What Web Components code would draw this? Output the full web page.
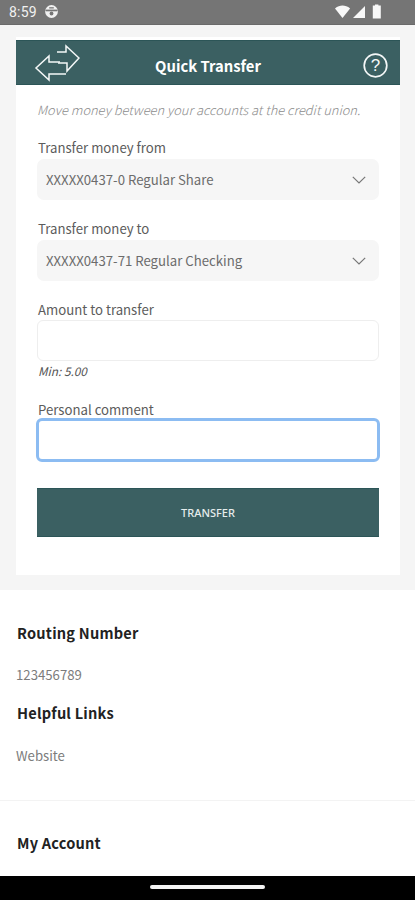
<!DOCTYPE html>
<html><head><meta charset="utf-8">
<style>
html,body{margin:0;padding:0;background:#fff}
body{width:415px;height:900px;overflow:hidden;font-family:"Noto Sans CJK SC","Source Sans Pro","Noto Sans",sans-serif;display:flex;flex-direction:column}
</style></head>
<body>
<status-bar></status-bar>
<transfer-panel>
  <transfer-card>
    <card-header title-text="Quick Transfer"></card-header>
    <p-note>Move money between your accounts at the credit union.</p-note>
    <select-field label="Transfer money from" value="XXXXX0437-0 Regular Share"></select-field>
    <select-field style="margin-top:19px" label="Transfer money to" value="XXXXX0437-71 Regular Checking"></select-field>
    <input-field label="Amount to transfer" hint="Min: 5.00"></input-field>
    <input-field label="Personal comment" focused></input-field>
    <action-button>TRANSFER</action-button>
  </transfer-card>
</transfer-panel>
<info-list>
  <info-head style="--top:33px">Routing Number</info-head>
  <info-text style="--top:22px">123456789</info-text>
  <info-head style="--top:18px">Helpful Links</info-head>
  <info-text style="--top:23px">Website</info-text>
  <info-rule></info-rule>
  <info-head style="--top:32px">My Account</info-head>
</info-list>
<nav-bar></nav-bar>
<script>
function def(name,html){
  customElements.define(name,class extends HTMLElement{
    constructor(){super();this.attachShadow({mode:'open'}).innerHTML=typeof html==='function'?'':html;}
    connectedCallback(){if(typeof html==='function')this.shadowRoot.innerHTML=html(this);}
  });
}
def('status-bar',`<style>
:host{display:flex;align-items:center;height:25px;flex:none;box-sizing:border-box;background:#757575;border-bottom:1px solid #6a6a6a;padding:0 33px 1px 9px;color:#f1f1f1;font:14px/1 Roboto,sans-serif}
.t{letter-spacing:.2px}
.r{margin-left:auto;display:flex;align-items:center}
svg{display:block}
</style>
<span class="t">8:59</span>
<svg style="margin-left:7px" width="15" height="15" viewBox="0 0 15 15"><circle cx="7.5" cy="7.5" r="6.4" fill="#f1f1f1"/><rect x="1.5" y="5.6" width="12" height="1.7" fill="#757575"/><circle cx="7.5" cy="9.500" r="1.900" fill="#757575"/><rect x="5.2" y="3.2" width="4.6" height="1.3" fill="#757575"/></svg>
<span class="r">
<svg width="18" height="14" viewBox="0 0 18 14"><path d="M1 3.5C3.5 1.4 6 .6 8.5.6s5.2.8 7.6 2.9L8.5 13z" fill="#f8f8f8"/></svg>
<svg width="14" height="14" viewBox="0 0 14 14"><path d="M13 1v12H1z" fill="#f8f8f8"/></svg>
<svg style="margin-left:6px" width="10" height="15" viewBox="0 0 10 15"><path d="M3 1.500V.5h3.400v1H8.800V14.500H.8V1.500z" fill="#f8f8f8"/></svg>
</span>`);
def('transfer-panel',`<style>
:host{display:block;flex:none;background:#f5f5f5;padding:12px 15px 15px 16px;height:565px;box-sizing:border-box}
</style><slot></slot>`);
def('transfer-card',`<style>
:host{display:block;background:#fff;height:538px;padding-top:3px;box-sizing:border-box}
</style><slot></slot>`);
def('card-header',h=>`<style>
:host{display:flex;align-items:center;justify-content:center;position:relative;height:45px;background:#3b6062;border-top:1px solid #2c5557;border-bottom:1px solid #2c5557;box-sizing:border-box;color:#fff}
.t{font-size:14.800px;font-weight:700;position:relative;top:3px}
.a{position:absolute;left:18px;top:3px}
.q{position:absolute;right:12.500px;top:12px}
</style>
<svg class="a" width="46" height="38" viewBox="0 0 46 38" fill="none" stroke="#f4f7f7" stroke-width="1.500" stroke-linejoin="miter">
<path d="M23 8H32V2L45 14L33 27V19H24"/>
<path d="M26 18H15V12L2 24L15 36V30H32"/>
</svg>
<span class="t">${h.getAttribute('title-text')}</span>
<svg class="q" width="25" height="25" viewBox="0 0 25 25"><circle cx="12.500" cy="12.500" r="11.300" fill="none" stroke="#f4f7f7" stroke-width="1.700"/><text x="12.500" y="18.300" text-anchor="middle" font-family="Liberation Sans,sans-serif" font-size="17" fill="#f4f7f7">?</text></svg>`);
def('p-note',`<style>
:host{display:block;padding:15px 0 0 21px;font-size:12.850px;line-height:20px;font-style:italic;font-weight:300;color:#8c8c8c;white-space:nowrap}
</style><slot></slot>`);
def('select-field',h=>`<style>
:host{display:block;margin:18px 21px 0 21px;font-size:13.200px;color:#5c5c5c}
label{display:block;height:20px;line-height:20px;margin-bottom:1px;padding-left:1px}
.b{display:flex;align-items:center;height:41px;border-radius:7px;background:#f6f6f6;padding:0 13px 0 9px;color:#6c6c6c}
svg{margin-left:auto}
</style><label>${h.getAttribute('label')}</label>
<div class="b"><span>${h.getAttribute('value')}</span><svg width="14" height="8" viewBox="0 0 14 8" fill="none" stroke="#777" stroke-width="1.200"><path d="M.8.8 7 7 13.200.8"/></svg></div>`);
def('input-field',h=>{const f=h.hasAttribute('focused'),m=h.getAttribute('hint');return `<style>
:host{display:block;margin:${f?'19px':'19px'} ${f?'20px':'21px'} 0 ${f?'20px':'21px'};font-size:13.200px;color:#5c5c5c}
label{display:block;height:20px;line-height:20px;margin-bottom:${f?'-2px':'0'};padding-left:${f?'2px':'1px'}}
.b{height:${f?'44px':'41px'};box-sizing:border-box;border-radius:6px;background:#fff;border:${f?'3px solid #8cbcf2':'1px solid #eeeeee'}}
.m{font-size:11.800px;line-height:20px;font-style:italic;color:#555;padding-left:1px}
</style><label>${h.getAttribute('label')}</label><div class="b"></div>${m?`<div class="m">${m}</div>`:''}`});
def('action-button',`<style>
:host{display:flex;align-items:center;justify-content:center;margin:26px 21px 0 21px;height:49px;background:#3b6062;border-top:1px solid #2c5557;border-bottom:1px solid #2c5557;box-sizing:border-box;color:#e6eded;font:11px/1 "Noto Sans",sans-serif;font-weight:500}
</style><slot></slot>`);
def('info-list',`<style>
:host{display:block;flex:1;background:#fff;overflow:hidden}
</style><slot></slot>`);
def('info-head',`<style>
:host{display:block;padding:var(--top) 0 0 17px;font-size:14.600px;line-height:20px;font-weight:700;letter-spacing:.2px;color:#222}
</style><slot></slot>`);
def('info-text',`<style>
:host{display:block;padding:var(--top) 0 0 16px;font-size:13.200px;line-height:20px;color:#7c7c7c}
</style><slot></slot>`);
def('info-rule',`<style>
:host{display:block;height:1px;background:#f3f3f3;margin-top:34px}
</style>`);
def('nav-bar',`<style>
:host{display:flex;align-items:center;justify-content:center;height:24px;flex:none;background:#000}
i{display:block;width:115px;height:4px;border-radius:2px;background:#f4f4f4;margin-top:-2px}
</style><i></i>`);
</script>
</body></html>
